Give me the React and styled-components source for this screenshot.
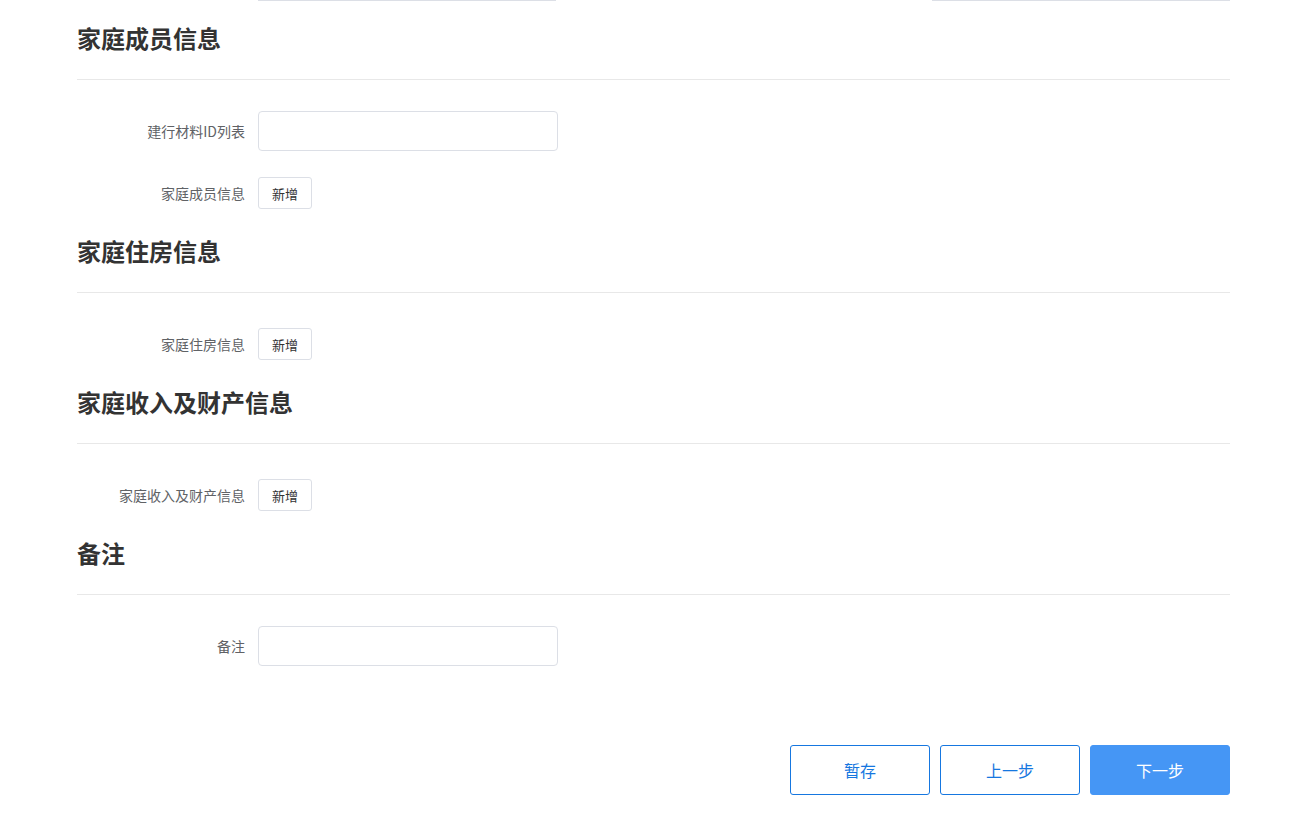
import React from "react";
import styled, { createGlobalStyle } from "styled-components";

const Global = createGlobalStyle`
  html, body { margin: 0; padding: 0; background: #fff; }
  body { font-family: "Noto Sans CJK SC", "Noto Sans", sans-serif; color: #333; }
  * { box-sizing: border-box; }
`;

const Page = styled.div`
  width: 1153px;
  margin-left: 77px;
  padding-bottom: 18px;
`;

const CutRow = styled.div`
  display: flex;
  height: 1px;
  padding-left: 181px;
`;

const CutEdge = styled.div`
  width: 298px;
  height: 1px;
  background: #dcdfe6;
  margin-left: ${(p) => p.$offset || 0}px;
`;

const Section = styled.section`
  display: flex;
  flex-direction: column;
`;

const Title = styled.h2`
  margin: ${(p) => (p.$first ? "21px" : "0")} 0 31px;
  padding-bottom: 26px;
  border-bottom: 1px solid #e8e8e8;
  font-size: 24px;
  line-height: 31px;
  font-weight: 700;
  color: #333;
`;

const Row = styled.div`
  display: flex;
  align-items: center;
  min-height: 40px;
  margin-bottom: 22px;
`;

const Label = styled.label`
  width: 181px;
  padding-right: 13px;
  text-align: right;
  font-size: 14px;
  color: #606266;
`;

const Input = styled.input`
  width: 300px;
  height: 40px;
  border: 1px solid #dcdfe6;
  border-radius: 4px;
  outline: none;
  font: inherit;
  padding: 0 12px;
`;

const AddButton = styled.button`
  height: 32px;
  width: 54px;
  border: 1px solid #dcdfe6;
  border-radius: 3px;
  background: #fff;
  color: #333;
  font: inherit;
  font-size: 13px;
  padding: 0;
`;

const Footer = styled.div`
  display: flex;
  justify-content: flex-end;
  gap: 10px;
  margin-top: 57px;
`;

const StepButton = styled.button`
  width: 140px;
  height: 50px;
  border-radius: 3px;
  font: inherit;
  font-size: 16px;
  border: 1px solid ${(p) => (p.$primary ? "#4596f5" : "#1677e0")};
  background: ${(p) => (p.$primary ? "#4596f5" : "#fff")};
  color: ${(p) => (p.$primary ? "#fff" : "#1677e0")};
`;

const sections = [
  {
    title: "家庭成员信息",
    rows: [
      { label: "建行材料ID列表", type: "input" },
      { label: "家庭成员信息", type: "add" },
    ],
  },
  { title: "家庭住房信息", rows: [{ label: "家庭住房信息", type: "add" }] },
  { title: "家庭收入及财产信息", rows: [{ label: "家庭收入及财产信息", type: "add" }] },
  { title: "备注", rows: [{ label: "备注", type: "input" }] },
];

export default function App() {
  return (
    <>
      <Global />
      <Page>
        <CutRow>
          <CutEdge />
          <CutEdge $offset={376} />
        </CutRow>
        {sections.map((s, i) => (
          <Section key={s.title}>
            <Title $first={i === 0}>{s.title}</Title>
            {s.rows.map((r) => (
              <Row key={r.label}>
                <Label>{r.label}</Label>
                {r.type === "input" ? <Input /> : <AddButton>新增</AddButton>}
              </Row>
            ))}
          </Section>
        ))}
        <Footer>
          <StepButton>暂存</StepButton>
          <StepButton>上一步</StepButton>
          <StepButton $primary>下一步</StepButton>
        </Footer>
      </Page>
    </>
  );
}
